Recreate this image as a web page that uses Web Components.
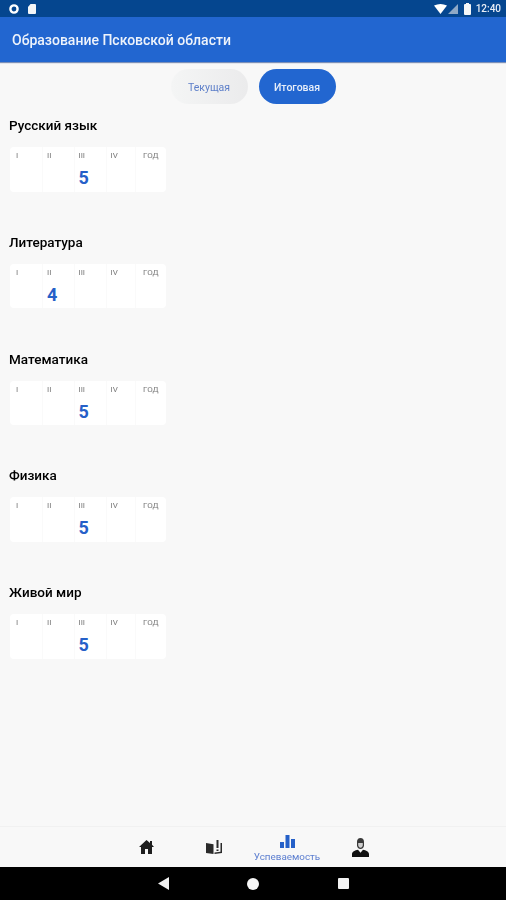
<!DOCTYPE html>
<html lang="ru">
<head>
<meta charset="utf-8">
<title>Успеваемость</title>
<style>
html, body { margin: 0; height: 100%; }
body { font-family: Roboto, "Liberation Sans", sans-serif; background: #f8f8f8; }
/* the reference is a soft upscaled screenshot */
#app { display: flex; flex-direction: column; height: 900px; filter: blur(0.6px); }
</style>
</head>
<body>
<div id="app">
    <status-bar></status-bar>
    <app-bar>Образование Псковской области</app-bar>
    <mode-toggle></mode-toggle>
    <main-list>
        <subject-card name="Русский язык" pos="2" mark="5"></subject-card>
        <subject-card name="Литература" pos="1" mark="4"></subject-card>
        <subject-card name="Математика" pos="2" mark="5"></subject-card>
        <subject-card name="Физика" pos="2" mark="5"></subject-card>
        <subject-card name="Живой мир" pos="2" mark="5"></subject-card>
    </main-list>
    <bottom-nav></bottom-nav>
    <system-nav></system-nav>
</div>

<script>
class StatusBar extends HTMLElement {
    constructor() {
        super();
        this.attachShadow({ mode: 'open' });
        this.shadowRoot.innerHTML = `
            <style>
                :host { display: flex; align-items: center; height: 17px; background: #05468f; padding: 0 5px 0 9px; color: #fff; flex: none; }
                .left { display: flex; align-items: center; gap: 9px; }
                .right { display: flex; align-items: center; margin-left: auto; }
                svg { display: block; }
                .time { font-size: 10px; font-weight: 500; margin-left: 5px; color: #e8eef6; }
            </style>
            <div class="left">
                <svg width="10" height="10" viewBox="0 0 10 10"><circle cx="5" cy="5" r="3.6" fill="none" stroke="#fff" stroke-width="2.4"/></svg>
                <svg width="8" height="10" viewBox="0 0 8 10"><path d="M2.5 0H7a1 1 0 0 1 1 1v8a1 1 0 0 1-1 1H1a1 1 0 0 1-1-1V3z" fill="#f4f6f8"/></svg>
            </div>
            <div class="right">
                <svg width="13" height="10" viewBox="0 0 13 10"><path d="M0 1.500Q6.500-1.500 13 1.500L6.500 10z" fill="#fff"/></svg>
                <svg width="10" height="10" viewBox="0 0 10 10" style="margin-left:1px"><path d="M0 10L10 0v10z" fill="#8fa9c6"/></svg>
                <svg width="7" height="12" viewBox="0 0 7 12" style="margin-left:6px"><path d="M2 0h3v1h1a1 1 0 0 1 1 1v9a1 1 0 0 1-1 1H1a1 1 0 0 1-1-1V2a1 1 0 0 1 1-1h1z" fill="#f4f6f8"/></svg>
                <span class="time">12:40</span>
            </div>`;
    }
}

class AppBar extends HTMLElement {
    constructor() {
        super();
        this.attachShadow({ mode: 'open' });
        this.shadowRoot.innerHTML = `
            <style>
                :host { display: flex; align-items: center; height: 45px; flex: none; padding: 1px 12px 0; box-sizing: border-box; background: #2266d0; color: #eef3fb; font-size: 14px; font-weight: 500; box-shadow: 0 1px 1px rgba(0,40,120,.5); position: relative; }
            </style>
            <slot></slot>`;
    }
}

class ModeToggle extends HTMLElement {
    constructor() {
        super();
        this.attachShadow({ mode: 'open' });
        this.shadowRoot.innerHTML = `
            <style>
                :host { display: flex; justify-content: center; gap: 11px; padding-top: 7px; flex: none; }
                .btn { width: 77px; height: 35px; box-sizing: border-box; padding-top: 1px; border-radius: 18px; display: flex; align-items: center; justify-content: center; font-size: 10.5px; }
                .off { background: linear-gradient(90deg, #f4f5f5, #ebebec); color: #5d7fc9; }
                .on { background: #2266d0; color: #e6eefa; font-weight: 500; }
            </style>
            <div class="btn off">Текущая</div>
            <div class="btn on">Итоговая</div>`;
    }
}

class MainList extends HTMLElement {
    constructor() {
        super();
        this.attachShadow({ mode: 'open' });
        this.shadowRoot.innerHTML = `
            <style>
                :host { display: flex; flex-direction: column; flex: 1; gap: 28.8px; padding: 12px 0 0 9px; }
            </style>
            <slot></slot>`;
    }
}

class SubjectCard extends HTMLElement {
    constructor() {
        super();
        this.attachShadow({ mode: 'open' });
    }

    connectedCallback() {
        const heads = ['I', 'II', 'III', 'IV', 'ГОД'];
        const pos = parseInt(this.getAttribute('pos'));
        const mark = this.getAttribute('mark');
        const cols = heads.map((h, i) => `
            <div class="col">
                <div class="head">${h}</div>
                <div class="mark">${i === pos ? mark : ''}</div>
            </div>`).join('');
        this.shadowRoot.innerHTML = `
            <style>
                :host { display: block; height: 88px; }
                .name { height: 18px; line-height: 18px; font-size: 13.5px; font-weight: 500; color: #000; margin-bottom: 13px; }
                .table { display: grid; grid-template-columns: 32px 31.5px 32px 29.5px 31px; width: 156px; height: 44.5px; margin-left: 1px; border-radius: 4px; overflow: hidden; }
                .col { background: #fff; display: flex; flex-direction: column; border-left: 1px solid #fafafa; box-sizing: border-box; padding-left: 4px; }
                .col:first-child { border-left: 0; padding-left: 6px; }
                .col:last-child { padding-left: 7px; }
                .head { height: 17px; line-height: 17px; font-size: 8px; color: #777; will-change: opacity; }
                .mark { height: 27.5px; line-height: 27px; font-size: 18px; font-weight: 700; color: #2560c8; }
            </style>
            <div class="name">${this.getAttribute('name')}</div>
            <div class="table">${cols}</div>`;
    }
}

class BottomNav extends HTMLElement {
    constructor() {
        super();
        this.attachShadow({ mode: 'open' });
        this.shadowRoot.innerHTML = `
            <style>
                :host { display: grid; grid-template-columns: 72px 64px 82px 64px; justify-content: start; height: 41px; flex: none; background: #f8f8f8; border-top: 1px solid #f1f1f1; box-sizing: border-box; padding-left: 110px; }
                .item { display: flex; flex-direction: column; align-items: center; justify-content: center; }
                .item.active { justify-content: flex-start; padding-top: 8px; }
                svg { display: block; }
                .label { font-size: 9.9px; color: #5d7fd0; line-height: 10px; margin-top: 4px; white-space: nowrap; }
            </style>
            <div class="item"><svg width="15" height="14" viewBox="0 0 15 14"><path d="M7.500 0L11 3V1h2v3.700L15 7h-2v7H9V9H6v5H2V7H0z" fill="#1e1e1e"/></svg></div>
            <div class="item"><svg width="16" height="14" viewBox="0 0 16 14"><path d="M0 3l7.500 1.200V14L0 13z" fill="#2a2a2a"/><path d="M10.500 0h2v8h-2zM10.500 9.500h2v1.500h-2zM14.500 3H16v10l-7.500 1v-1.500l6-.8z" fill="#2a2a2a"/></svg></div>
            <div class="item active"><svg width="15" height="13" viewBox="0 0 15 13"><path d="M0 7h4v6H0zM5.500 0h4v13h-4zM11 4h4v9h-4z" fill="#2560c8"/></svg><span class="label">Успеваемость</span></div>
            <div class="item"><svg width="17" height="19" viewBox="0 0 17 19"><path d="M8.500 0C10.700 0 12 1.600 12 3.500v3.700C12 9.500 10.500 11 8.500 11S5 9.500 5 7.200V3.500C5 1.600 6.300 0 8.500 0z" fill="#3a3a3a"/><path d="M6.200 5h4.600v2c0 1.400-.9 2.700-2.300 2.700S6.200 8.400 6.200 7z" fill="#cfcfcf"/><path d="M0 19v-3c0-2.500 3-3.800 6-4.300l2.500 3 2.500-3c3 .5 6 1.800 6 4.300v3z" fill="#111"/></svg></div>`;
    }
}

class SystemNav extends HTMLElement {
    constructor() {
        super();
        this.attachShadow({ mode: 'open' });
        this.shadowRoot.innerHTML = `
            <style>
                :host { display: grid; grid-template-columns: repeat(3, 90px); justify-content: center; justify-items: center; align-items: center; height: 33px; background: #000; flex: none; }
                svg { display: block; }
            </style>
            <svg width="11" height="13" viewBox="0 0 11 13"><path d="M11 0v13L0 6.500z" fill="#f2f2f2"/></svg>
            <svg width="12" height="12" viewBox="0 0 12 12"><circle cx="6" cy="6" r="6" fill="#f6f6f6"/></svg>
            <svg width="11" height="11" viewBox="0 0 11 11"><rect width="11" height="11" rx="1" fill="#f2f2f2"/></svg>`;
    }
}

customElements.define('status-bar', StatusBar);
customElements.define('app-bar', AppBar);
customElements.define('mode-toggle', ModeToggle);
customElements.define('main-list', MainList);
customElements.define('subject-card', SubjectCard);
customElements.define('bottom-nav', BottomNav);
customElements.define('system-nav', SystemNav);
</script>
</body>
</html>
